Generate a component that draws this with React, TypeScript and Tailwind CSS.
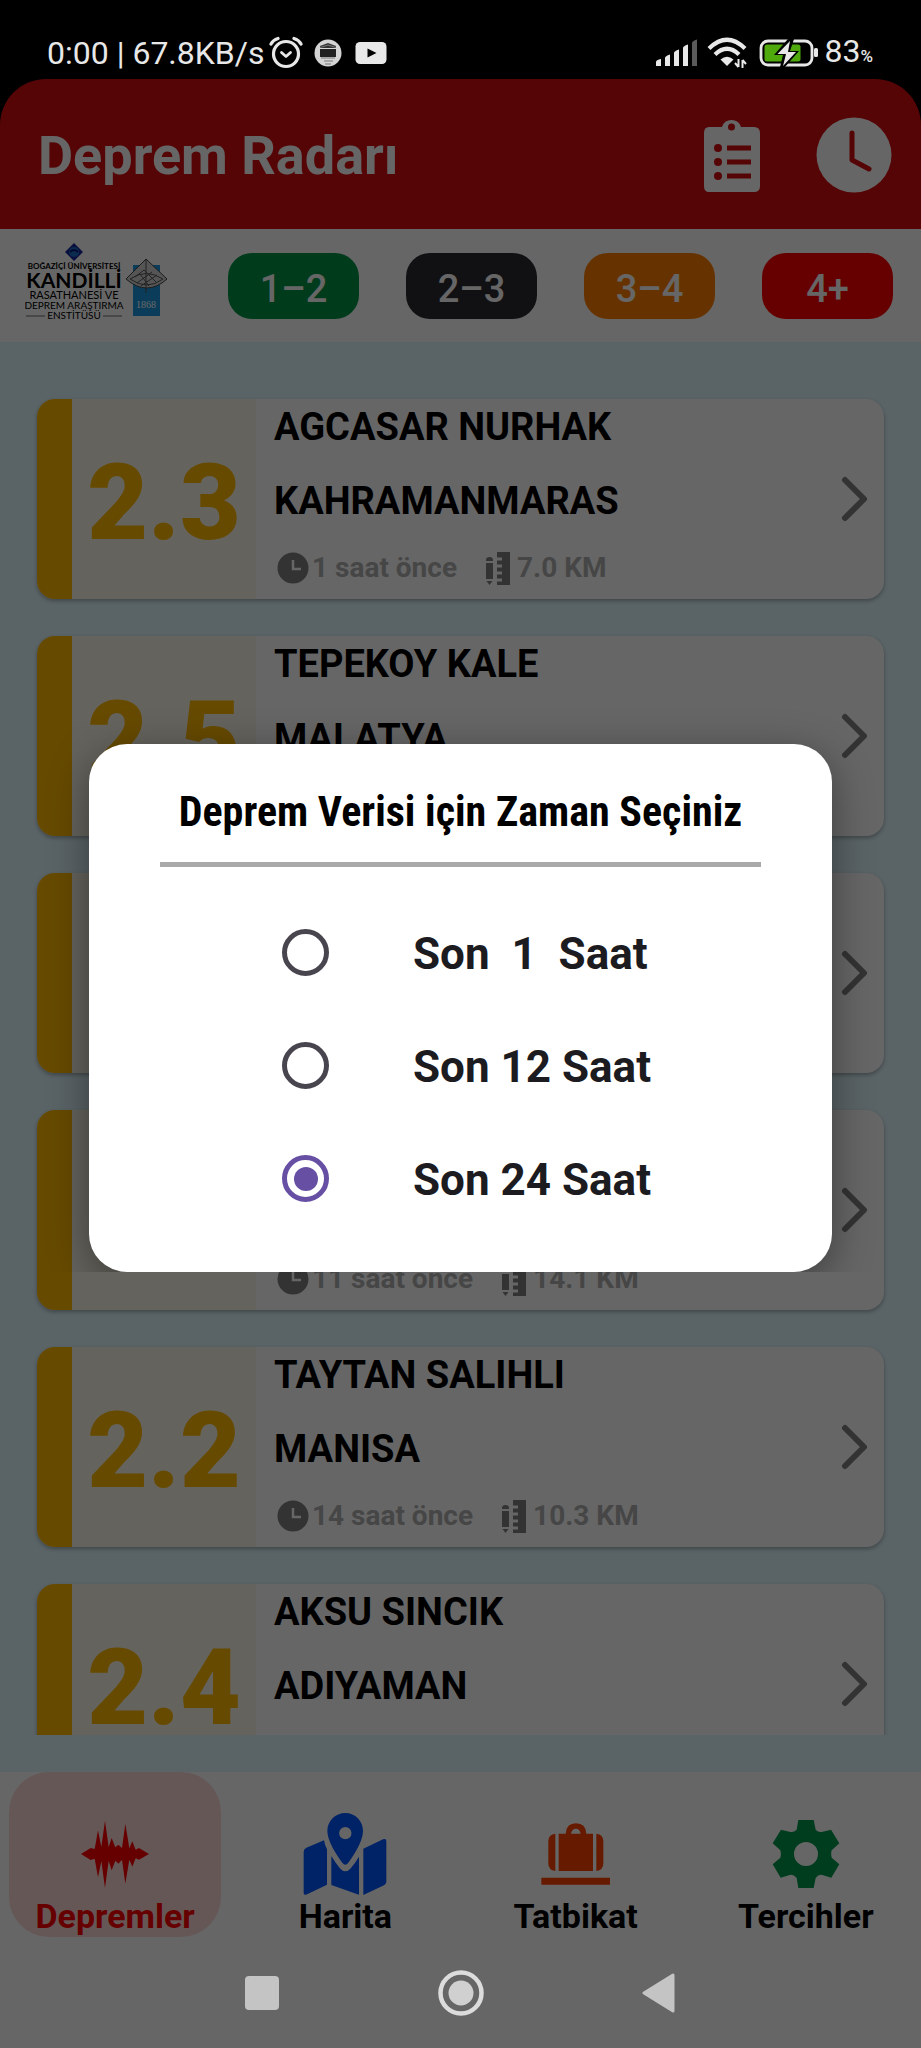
import { useState } from "react";
import type { ReactNode } from "react";

type Quake = {
  id: number;
  magnitude?: string;
  district?: string;
  city?: string;
  time?: string;
  depth?: string;
};

const quakes: Quake[] = [
  { id: 1, magnitude: "2.3", district: "AGCASAR NURHAK", city: "KAHRAMANMARAS", time: "1 saat önce", depth: "7.0 KM" },
  { id: 2, magnitude: "2.5", district: "TEPEKOY KALE", city: "MALATYA" },
  { id: 3 },
  { id: 4, time: "11 saat önce", depth: "14.1 KM" },
  { id: 5, magnitude: "2.2", district: "TAYTAN SALIHLI", city: "MANISA", time: "14 saat önce", depth: "10.3 KM" },
  { id: 6, magnitude: "2.4", district: "AKSU SINCIK", city: "ADIYAMAN" },
];

const filters = [
  { label: "1–2", color: "bg-[#009448]" },
  { label: "2–3", color: "bg-[#2b2b31]" },
  { label: "3–4", color: "bg-[#ff8000]" },
  { label: "4+", color: "bg-[#ff0000]" },
];

const ranges = [
  { value: "1", label: "Son  1  Saat" },
  { value: "12", label: "Son 12 Saat" },
  { value: "24", label: "Son 24 Saat" },
];

function StatusBar() {
  return (
    <div className="relative z-20 flex h-[79px] shrink-0 items-center justify-between pt-[27px] pr-[48px] pl-[47px] text-[#e8e8e8]">
      <div className="flex items-center">
        <span className="text-[32px] leading-[40px]">0:00 | 67.8KB/s</span>
        <svg className="ml-[4px] h-[34px] w-[34px]" viewBox="0 0 34 34" fill="none" stroke="currentColor" strokeLinecap="round">
          <circle cx="17" cy="18" r="12.5" strokeWidth="3.2" />
          <path d="M2 8Q4 4 9 2.500M32 8Q30 4 25 2.500" strokeWidth="3.200" />
          <path d="M12.500 16.500L17 20.500L21.500 16.500" strokeWidth="2.800" strokeLinejoin="round" />
        </svg>
        <svg className="ml-[10px] h-[30px] w-[30px]" viewBox="0 0 30 30">
          <circle cx="15" cy="15" r="13.500" fill="#d4d4d4" />
          <path d="M7 8L15 5L23 8V10H7Z" fill="#333" />
          <path d="M7 11H23V19H7Z" fill="#222" />
          <path d="M7 9.500L15 7L23 9.500M8 20H22M11 23H20M12 26H18" stroke="#777" fill="none" />
        </svg>
        <svg className="ml-3 h-[24px] w-[32px]" viewBox="0 0 32 24">
          <rect x="0.500" y="1" width="31" height="22" rx="4.500" fill="currentColor" />
          <path d="M12.500 7.500L21.500 12L12.500 16.500Z" fill="#000" />
        </svg>
      </div>
      <div className="flex items-center">
        <svg className="h-[28px] w-[42px]" viewBox="0 0 42 28">
          <path d="M1 23Q1 21 6 20V27H1ZM10 19Q10 17 15 15.500V27H10ZM19 14Q19 12 24 10.500V27H19ZM28 9Q28 7 33 5.500V27H28Z" fill="currentColor" />
          <path d="M37 4Q37 2 42 0.500V27H37Z" fill="#5b5b5b" />
        </svg>
        <svg className="ml-[10px] h-[32px] w-[40px]" viewBox="0 0 40 32" fill="none" stroke="currentColor">
          <path d="M2 11.500Q20 -6 38 11.500" strokeWidth="4.200" />
          <path d="M8 17.500Q20 6 32 17.500" strokeWidth="4.200" />
          <path d="M13.500 22.500Q20 17 26.500 22.500L20 29Z" fill="currentColor" stroke="none" />
          <path d="M31.500 22V30M28 26L31.500 30M35.500 31V23M39 27L35.500 23" strokeWidth="2" />
        </svg>
        <svg className="ml-[12px] h-[28px] w-[60px]" viewBox="0 0 60 28">
          <rect x="2" y="2" width="51" height="24" rx="7" fill="none" stroke="currentColor" strokeWidth="2.800" />
          <rect x="5.500" y="5.500" width="36" height="17" rx="2.500" fill="#4fa80c" />
          <path d="M29 0L15 16H24L21 28H26L40 12H31L35 0Z" fill="#000" />
          <path d="M31 2L18.500 15H27L24 27L37 13H29Z" fill="currentColor" />
          <rect x="55" y="9" width="4" height="9" rx="1.500" fill="currentColor" />
        </svg>
        <span className="ml-[6px] text-[32px] leading-[40px]">
          83<span className="text-[17px] font-medium">%</span>
        </span>
      </div>
    </div>
  );
}

function Header() {
  return (
    <header className="flex h-[150px] shrink-0 items-center rounded-t-[46px] bg-[#d50d0f] pt-[2px] pr-[29px] pl-[38px] text-white">
      <h1 className="flex-1 pt-[2px] text-[54px] leading-[60px] font-bold">Deprem Radarı</h1>
      <button type="button" aria-label="Liste" className="mr-[55px]">
        <svg className="h-[76px] w-[58px]" viewBox="0 0 58 76">
          <path fill="currentColor" d="M6 10H19A10 10 0 0 1 38 10H51Q57 10 57 16V69Q57 75 51 75H6Q1 75 1 69V16Q1 10 6 10Z" />
          <circle cx="28.500" cy="10" r="3.500" fill="#d50d0f" />
          <g fill="#d50d0f">
            <circle cx="15" cy="31" r="4" />
            <circle cx="15" cy="45" r="4" />
            <circle cx="15" cy="59" r="4" />
            <path d="M24 28.500H48V33.500H24ZM24 42.500H48V47.500H24ZM24 56.500H48V61.500H24Z" />
          </g>
        </svg>
      </button>
      <button type="button" aria-label="Zaman">
        <svg className="h-[76px] w-[76px]" viewBox="0 0 76 76">
          <circle cx="38" cy="38" r="37.500" fill="currentColor" />
          <path d="M36 16V43L53 52" fill="none" stroke="#d50d0f" strokeWidth="5" strokeLinecap="round" strokeLinejoin="round" />
        </svg>
      </button>
    </header>
  );
}

function KandilliLogo() {
  return (
    <svg className="block h-[80px] w-[144px]" viewBox="0 0 144 80" role="img" aria-label="Kandilli Rasathanesi">
      <path d="M49 0L58 9L49 18L40 9Z" fill="#1a2a9c" />
      <circle cx="49" cy="9" r="5" fill="#1c6fc4" />
      <path d="M45 9Q49 5 53 9" fill="none" stroke="#0a1a7c" strokeWidth="2" />
      <g fill="#000" textAnchor="middle" className="font-[Lato,sans-serif]">
        <text x="49" y="26" fontSize="8" fontWeight="700">BOĞAZİÇİ ÜNİVERSİTESİ</text>
        <text x="49" y="45" fontSize="21" fontWeight="700">KANDİLLİ</text>
        <text x="49" y="56" fontSize="11">RASATHANESİ VE</text>
        <text x="49" y="66" fontSize="10">DEPREM ARAŞTIRMA</text>
        <text x="49" y="76" fontSize="10">ENSTİTÜSÜ</text>
      </g>
      <path d="M1 73H20M78 73H97" stroke="#444" strokeWidth="0.800" />
      <rect x="108" y="22" width="27" height="51" fill="#1c9ae0" />
      <path d="M101 36L121 16L142 36Q122 54 101 36Z" fill="#d4d4d4" stroke="#444" strokeWidth="1" />
      <path d="M105 36Q121 25 138 36Q122 48 105 36M121 17V50M110 34L119 27L131 39M112 40L127 29M116 43L132 32M115 31L124 43" fill="none" stroke="#555" strokeWidth="1" />
      <text x="121" y="65" fontSize="10" textAnchor="middle" fill="#fff" className="font-[Liberation_Serif,serif]">1868</text>
    </svg>
  );
}

function FilterBar() {
  return (
    <div className="flex h-[113px] shrink-0 items-center bg-white pr-[28px] pl-[25px]">
      <div className="flex-1 pb-[6px]">
        <KandilliLogo />
      </div>
      <div className="flex gap-[47px]">
        {filters.map((f) => (
          <button key={f.label} type="button" className={`h-[66px] w-[131px] rounded-[24px] pt-[6px] text-[38px] leading-[46px] font-medium text-white ${f.color}`}>
            {f.label}
          </button>
        ))}
      </div>
    </div>
  );
}

function QuakeCard({ quake }: { quake: Quake }) {
  return (
    <li className="flex h-[200px] shrink-0 overflow-hidden rounded-[18px] bg-white shadow-[0_2px_4px_rgba(0,0,0,0.3)]">
      <div className="w-[35px] shrink-0 bg-[#ffb900]" />
      <div className="flex w-[184px] shrink-0 items-center justify-center bg-[#fdf8e9] pt-[10px] text-[105px] leading-[120px] font-black text-[#ffb900]">
        {quake.magnitude}
      </div>
      <div className="flex flex-1 flex-col pl-[18px]">
        <h2 className="h-[56px] text-[38px] leading-[56px] font-bold text-black">{quake.district}</h2>
        <p className="h-[92px] text-[38px] leading-[92px] font-bold text-black">{quake.city}</p>
        {quake.time && (
          <div className="flex h-[42px] items-center text-[28px] leading-[42px] font-bold text-[#b0b0b0]">
            <svg className="mr-[3px] ml-[3px] h-[32px] w-[32px]" viewBox="0 0 32 32">
              <circle cx="16" cy="16" r="15.500" fill="#808080" />
              <path d="M16 8V17H24" fill="none" stroke="#fff" strokeWidth="2.500" />
            </svg>
            <span>{quake.time}</span>
            <svg className="mr-[6px] ml-[28px] h-[33px] w-[26px]" viewBox="0 0 26 33" fill="#808080">
              <path d="M1 9V8Q1 5 4.500 5Q8 5 8 8V9ZM1 11H8V27H1ZM1.500 29H7.500L4.500 33ZM12 0H25V33H12V29.500H17V26.500H12V22.500H17V19.500H12V15.500H17V12.500H12V8.500H17V5.500H12Z" />
            </svg>
            <span>{quake.depth}</span>
          </div>
        )}
      </div>
      <div className="flex items-center pr-[14px]">
        <svg className="h-[46px] w-[30px]" viewBox="0 0 30 46" fill="none" stroke="#808080" strokeWidth="6" strokeLinecap="round" strokeLinejoin="round">
          <path d="M5 4L24 23L5 42" />
        </svg>
      </div>
    </li>
  );
}

function SeismicIcon() {
  return (
    <svg className="h-[68px] w-[68px]" viewBox="243 781 204 204" fill="currentColor">
      <path d="M243 883L272 865L284 868L294 812L304 862L315 783L326 862L335 835L346 863L355 855L366 865L376 792L388 866L397 845L407 870L417 865L447 883L417 900L407 896L397 921L388 900L376 972L366 900L355 912L346 903L335 932L326 904L315 985L304 904L294 953L284 897L272 901Z" />
    </svg>
  );
}

function MapIcon() {
  return (
    <svg className="h-[84px] w-[84px]" viewBox="910 756 252 252" fill="currentColor">
      <path fillRule="evenodd" d="M1037 759C1067 759 1090 783 1090 813C1090 842 1064 884 1046 908Q1037 920 1028 908C1010 884 983 842 983 813C983 783 1007 759 1037 759ZM1037 801A18 18 0 1 0 1037 838A18 18 0 1 0 1037 801Z" />
      <path d="M920 863L973 841Q975 854 982 868V974L919 1004Q912 1006 912 999V875Q912 867 920 863ZM995 888Q1008 910 1022 926Q1037 942 1052 926Q1066 910 1078 890V1004L995 975ZM1091 866L1150 838Q1160 835 1160 843V966Q1160 972 1153 976L1091 1005Z" />
    </svg>
  );
}

function LuggageIcon() {
  return (
    <svg className="h-[68px] w-[70px]" viewBox="242 781 210 204" fill="currentColor">
      <path d="M285 822V934Q264 930 264 912V844Q264 825 285 822ZM295 822H316Q318 791 347 791Q376 791 378 822H398V934H295ZM332 822H361Q358 807 347 807Q335 807 332 822ZM408 822Q429 825 429 844V912Q429 930 408 934ZM243 954H449V975H243Z" fillRule="evenodd" />
    </svg>
  );
}

function GearIcon() {
  return (
    <svg className="h-[68px] w-[68px]" viewBox="936 781 204 204" fill="currentColor">
      <path fillRule="evenodd" d="M1015 780H1061L1067 810Q1076 820 1088 816L1113 810L1138 851L1115 872Q1112 883 1115 894L1138 914L1114 954L1087 946Q1076 943 1067 955L1061 985H1015L1010 955Q1000 943 989 946L962 954L938 914L961 894Q964 883 961 872L938 851L963 810L988 816Q1000 820 1010 810ZM1038 847A36 36 0 1 0 1038 919A36 36 0 1 0 1038 847Z" />
    </svg>
  );
}

const tabs: { label: string; icon: ReactNode; tile: string; iconColor: string }[] = [
  { label: "Depremler", icon: <SeismicIcon />, tile: "bg-[#ffdada] text-[#ff0000]", iconColor: "text-[#ff0000]" },
  { label: "Harita", icon: <MapIcon />, tile: "text-black", iconColor: "text-[#0055ff]" },
  { label: "Tatbikat", icon: <LuggageIcon />, tile: "text-black", iconColor: "text-[#ff4400]" },
  { label: "Tercihler", icon: <GearIcon />, tile: "text-black", iconColor: "text-[#00994d]" },
];

function TabBar() {
  return (
    <nav className="grid h-[165px] shrink-0 grid-cols-4 bg-white">
      {tabs.map((t) => (
        <a key={t.label} href="#" className={`mx-[9px] flex flex-col items-center rounded-[40px] pt-[39px] ${t.tile}`}>
          <span className={`flex h-[86px] items-center ${t.iconColor}`}>{t.icon}</span>
          <span className="text-[34px] leading-[38px] font-bold">{t.label}</span>
        </a>
      ))}
    </nav>
  );
}

function SystemNav() {
  return (
    <div className="flex h-[111px] shrink-0 items-center justify-center bg-white">
      <div className="relative z-20 flex items-center gap-[153px] text-[#c4c4c4]">
        <button type="button" aria-label="Son uygulamalar" className="flex w-[46px] justify-center">
          <span className="h-[34px] w-[34px] rounded-[4px] bg-[#c4c4c4]" />
        </button>
        <button type="button" aria-label="Ana ekran">
          <svg className="h-[48px] w-[46px]" viewBox="0 0 46 48">
            <circle cx="23" cy="24" r="20.500" fill="none" stroke="#dcdcdc" strokeWidth="4.500" />
            <circle cx="23" cy="24" r="12.500" fill="#d0d0d0" />
          </svg>
        </button>
        <button type="button" aria-label="Geri">
          <svg className="h-[40px] w-[46px]" viewBox="0 0 46 40">
            <path d="M7 20L36 2V38Z" fill="currentColor" stroke="currentColor" strokeWidth="3" strokeLinejoin="round" />
          </svg>
        </button>
      </div>
    </div>
  );
}

function TimeDialog() {
  const [selected, setSelected] = useState("24");
  return (
    <div className="absolute inset-0 z-10 flex items-center justify-center bg-black/60 px-[89px]">
      <div className="mb-[32px] w-full [clip-path:inset(-60px_-60px_0px_-60px)]">
        <div role="dialog" aria-labelledby="range-title" className="flex h-[528px] flex-col rounded-[38px] bg-white px-[71px] shadow-[0_10px_40px_rgba(0,0,0,0.4)]">
          <h2 id="range-title" className="mt-[36px] text-center font-['Liberation_Sans_Narrow','Roboto_Condensed','Open_Sans_Condensed',Roboto,sans-serif] text-[42px] leading-[64px] font-bold whitespace-nowrap text-black">
            Deprem Verisi için Zaman Seçiniz
          </h2>
          <hr className="mt-[18px] border-0 border-t-[5px] border-[#a9a9a9]" />
          <div className="mt-[29px] flex flex-col pl-[122px]">
            {ranges.map((r) => (
              <label key={r.value} className="flex h-[113px] items-center text-[#1c1b1f]">
                <input
                  type="radio"
                  name="range"
                  value={r.value}
                  checked={selected === r.value}
                  onChange={() => setSelected(r.value)}
                  className="grid h-[47px] w-[47px] appearance-none place-content-center rounded-full border-[5px] border-[#49454f] before:h-[24px] before:w-[24px] before:rounded-full checked:border-[#6750a4] checked:before:bg-[#6750a4]"
                />
                <span className="ml-[84px] pt-[2px] text-[44px] leading-[50px] font-bold whitespace-pre">{r.label}</span>
              </label>
            ))}
          </div>
        </div>
      </div>
    </div>
  );
}

export default function App() {
  return (
    <div className="relative flex h-screen flex-col overflow-hidden bg-black font-[Roboto,sans-serif]">
      <StatusBar />
      <Header />
      <FilterBar />
      <main className="flex min-h-0 flex-1 flex-col bg-[#e1f8ff] py-[37px]">
        <ul className="flex min-h-0 flex-1 flex-col gap-[37px] overflow-hidden px-[37px] pt-[20px]">
          {quakes.map((q) => (
            <QuakeCard key={q.id} quake={q} />
          ))}
        </ul>
      </main>
      <TabBar />
      <SystemNav />
      <TimeDialog />
    </div>
  );
}
